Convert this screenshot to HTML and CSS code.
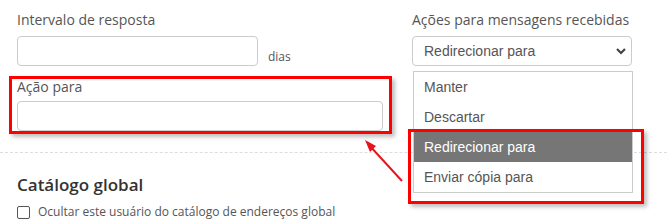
FILE: index.html
```html
<!DOCTYPE html>
<html lang="pt-BR">
<head>
    <meta charset="UTF-8">
    <meta name="viewport" content="width=device-width, initial-scale=1.0">
    <title>Respostas automáticas</title>
    <link rel="stylesheet" href="styles.css">
</head>
<body>

    <div class="settings">
        <div class="form-row">
            <div class="col-left">
                <label class="field-label" for="interval">Intervalo de resposta</label>
                <div class="inline-group">
                    <input type="text" id="interval" class="text-input short">
                    <span class="unit">dias</span>
                </div>

                <div class="field-group marked">
                    <label class="field-label tight" for="action-to">Ação para</label>
                    <input type="text" id="action-to" class="text-input wide">
                </div>
            </div>

            <div class="col-right">
                <label class="field-label">Ações para mensagens recebidas</label>
                <div class="select-box">
                    <span class="select-value">Redirecionar para</span>
                    <svg class="chevron" width="12" height="8" viewBox="0 0 12 8">
                        <path d="M2 2 L6 6 L10 2" fill="none" stroke="#444" stroke-width="2.2"/>
                    </svg>

                    <ul class="option-list">
                        <li>Manter</li>
                        <li>Descartar</li>
                        <li class="active">Redirecionar para</li>
                        <li>Enviar cópia para</li>
                    </ul>
                    <div class="mark-box"></div>
                </div>
            </div>
        </div>

        <div class="divider"></div>

        <h3 class="section-title">Catálogo global</h3>
        <label class="check-row">
            <span class="check"></span>
            Ocultar este usuário do catálogo de endereços global
        </label>

        <!-- annotation arrow -->
        <svg class="arrow" width="60" height="60" viewBox="0 0 60 60">
            <line x1="42" y1="45" x2="9" y2="9" stroke="#e8141b" stroke-width="2"/>
            <path d="M5 4 L16 10 L10 16 Z" fill="#e8141b"/>
        </svg>
    </div>

</body>
</html>
```

FILE: styles.css
```css
/* Global */
body {
    margin: 0;
    font-family: "Open Sans", sans-serif;
    color: #555;
    background: #fff;
}

.settings {
    position: relative;
    padding: 10px 0 0 17px;
    height: 210px;
    overflow: hidden;
}

.form-row {
    display: flex;
}

.col-left {
    width: 395px;
}

.col-right {
    width: 220px;
}

.field-label {
    display: block;
    font-size: 14px;
    line-height: 20px;
    margin-bottom: 6px;
}

.field-label.tight {
    line-height: 16px;
}

.inline-group {
    display: flex;
    align-items: flex-end;
}

.text-input {
    box-sizing: border-box;
    height: 30px;
    border: 1px solid #ccc;
    border-radius: 4px;
    background: #fff;
    margin: 0;
}

.text-input.short {
    width: 241px;
}

.text-input.wide {
    width: 366px;
}

.unit {
    font-size: 12px;
    margin-left: 10px;
    line-height: 18px;
}

.field-group.marked {
    margin: 10px 0 0 -8px;
    width: 383px;
    box-sizing: border-box;
    border: 3px solid #f00;
    padding: 0 5px 0 5px;
    height: 58px;
    box-shadow: 3px 3px 4px rgba(0, 0, 0, 0.25);
}

/* select */
.select-box {
    position: relative;
    box-sizing: border-box;
    width: 220px;
    height: 30px;
    border: 1px solid #ccc;
    border-radius: 4px;
    display: flex;
    align-items: center;
    padding-left: 11px;
    font-family: "Liberation Sans", Arial, sans-serif;
    font-size: 14px;
    color: #555;
}

.select-value {
    flex: 1;
}

.chevron {
    margin-right: 4px;
}

.option-list {
    position: absolute;
    top: 34px;
    left: 0;
    width: 220px;
    box-sizing: border-box;
    list-style: none;
    margin: 0;
    padding: 0;
    border: 1px solid #ccc;
    background: #fff;
    z-index: 2;
}

.option-list li {
    height: 30px;
    line-height: 30px;
    padding-left: 10px;
}

.option-list li.active {
    background: #767676;
    color: #fff;
}

.mark-box {
    position: absolute;
    top: 92px;
    left: -5px;
    width: 236px;
    height: 75px;
    box-sizing: border-box;
    border: 3px solid #f00;
    box-shadow: 3px 3px 4px rgba(0, 0, 0, 0.25);
    z-index: 3;
}

.divider {
    margin: 18px 0 0 -17px;
    border-top: 1px dashed #ddd;
}

.section-title {
    margin: 20px 0 0;
    font-size: 17px;
    font-weight: 600;
    color: #333;
    line-height: 24px;
}

.check-row {
    display: flex;
    align-items: center;
    margin-top: 7px;
    font-size: 12px;
    line-height: 16px;
}

.check {
    width: 11px;
    height: 11px;
    border: 1px solid #555;
    border-radius: 2px;
    margin-right: 8px;
}

.arrow {
    position: absolute;
    left: 360px;
    top: 136px;
}
```
